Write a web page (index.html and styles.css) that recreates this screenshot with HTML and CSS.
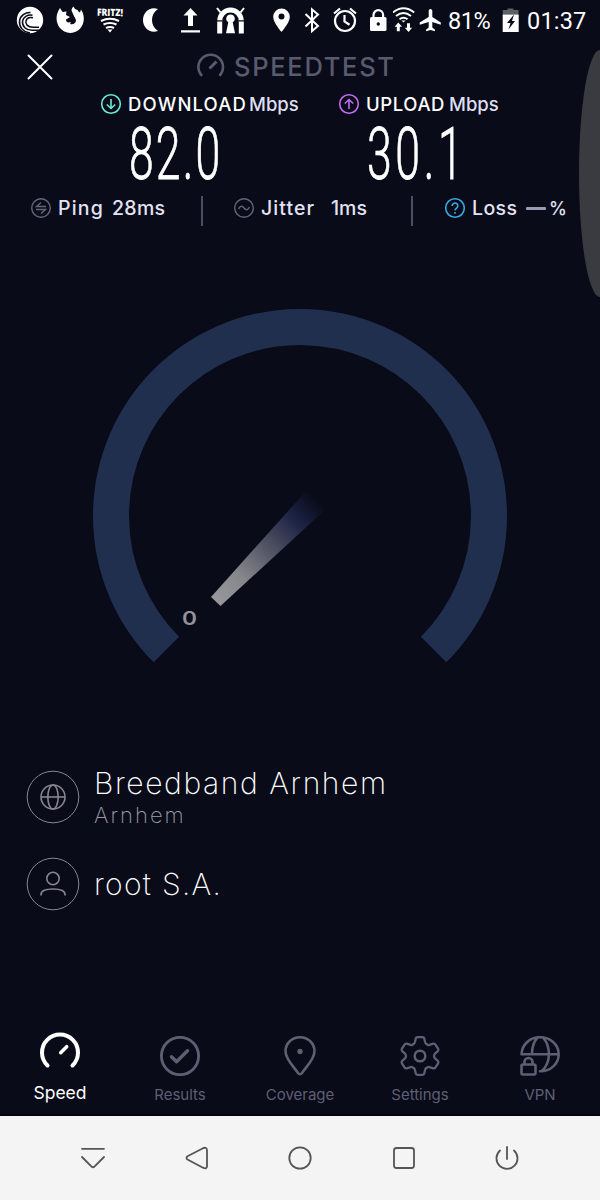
FILE: index.html
```
<!DOCTYPE html>
<html lang="en">

<head>
  <meta charset="utf-8">
  <title>Speedtest</title>
  <link rel="stylesheet" href="styles.css">
</head>

<body>
  <div class="status-bar">
    <div class="notifications">
      <svg width="40" height="40" viewBox="10 0 40 40">
        <circle cx="30" cy="20" r="13.2" fill="#fff"/>
        <g fill="none" stroke="#090b19" stroke-width="1.500">
          <path d="M39 27.300h-6c-5 0-8-3-7-6.500 1-3 4-4 7-3"/>
          <path d="M40 30.300h-8c-6 0-10-4-9.500-9 .5-4 5-7 10-6"/>
          <path d="M30 33c-7-1-11-6-10.500-12 .5-5 6-9 11-8.500"/>
        </g>
      </svg>
      <svg width="40" height="40" viewBox="50 0 40 40">
        <path fill="#fff" d="M60 8l2.500 4 4-.5-.5 3.500 4 2-4 2.500c0 2.500 2 3.500 5 2.500l-1 2c3.500 1 6-1 6-4l-2.500-5-2-4.500c0-2 1-3 2-4l1.500 2.500 2.500 1c.5 1 1.500 2 2.500 2.500l1-3c5 7 3 17-3 21-6 4-14 3-18.500-3-4-6-4-13 .5-19.500z"/>
      </svg>
      <svg width="40" height="40" viewBox="90 0 40 40">
        <g transform="rotate(1 110 12)">
          <text class="fritz" x="97" y="16" textLength="26" lengthAdjust="spacingAndGlyphs">FRITZ!</text>
        </g>
        <g fill="none" stroke="#fff" stroke-width="2.200">
          <path d="M101 21q9-4.500 18 0M103.500 24.500q6.500-3 13 0M106 28q4-2 8 0"/>
        </g>
        <path fill="#fff" d="M107.500 29.500h5l-2.500 3z"/>
      </svg>
      <svg width="40" height="40" viewBox="130 0 40 40">
        <path fill="#fff" d="M158 9c-8-3-15 3-15 11s7 14 15 11c-8-5-8-17 0-22z"/>
      </svg>
      <svg width="40" height="40" viewBox="170 0 40 40">
        <path fill="#fff" d="M190.500 8l7 7.500H193V26h-5V15.500h-4.500zM181 30.200h19v2.300h-19z"/>
      </svg>
      <svg width="40" height="40" viewBox="210 0 40 40">
        <g fill="none" stroke="#fff">
          <path stroke-width="5" d="M219.700 33.500V21a10.800 11 0 0 1 21.600 0v12.500"/>
          <path stroke-width="2" d="M217 8l3.500 4.500M244 8l-3.500 4.500"/>
        </g>
        <path fill="#fff" d="M230.500 14.500a4.200 4.200 0 0 1 2.200 7.800l2.300 11h-9l2.300-11a4.200 4.200 0 0 1 2.200-7.800z"/>
        <path stroke="#090b19" stroke-width="1.200" d="M216.500 20.800h6M238.500 20.800h6"/>
      </svg>
    </div>
    <div class="system">
      <svg width="32" height="40" viewBox="265 0 32 40">
        <path fill="#fff" fill-rule="evenodd" d="M281.500 8.500a8.300 8.300 0 0 0-8.300 8.300c0 6 8.300 15.200 8.300 15.200s8.300-9.200 8.300-15.200a8.300 8.300 0 0 0-8.300-8.300zm0 5a3 3 0 1 1 0 6 3 3 0 0 1 0-6z"/>
      </svg>
      <svg width="30" height="40" viewBox="297 0 30 40">
        <path fill="none" stroke="#fff" stroke-width="2" d="M305.500 14l12.500 12-6 5V9.500l6 5-12.500 12"/>
      </svg>
      <svg width="36" height="40" viewBox="327 0 36 40">
        <g fill="none" stroke="#fff" stroke-width="2.200">
          <circle cx="345" cy="21" r="10"/>
          <path d="M344.500 15v6.500l5 3.200M334 13.500l6-5M356 13.500l-6-5"/>
        </g>
      </svg>
      <svg width="30" height="40" viewBox="363 0 30 40">
        <rect x="370" y="17" width="16.500" height="14" rx="1.500" fill="#fff"/>
        <path fill="none" stroke="#fff" stroke-width="2.200" d="M373.500 17.500V15a4.800 4.800 0 0 1 9.600 0v2.500"/>
        <circle cx="378.300" cy="24" r="1.700" fill="#090b19"/>
      </svg>
      <svg width="22" height="40" viewBox="393 0 22 40">
        <g fill="none" stroke="#fff" stroke-width="1.900">
          <path d="M392.800 12.500q10.700-8.500 21.400 0M396 16q7.500-6 15 0M399.500 19.300q4-3 8 0"/>
        </g>
        <path fill="#fff" d="M401.500 20.500h4l-2 2zM398.300 22.500l3.700 4.200h-2.200v4.500h-3v-4.500h-2.200zM408.500 32l-3.700-4.200h2.200v-4.500h3v4.500h2.200z"/>
      </svg>
      <svg width="30" height="40" viewBox="415 0 30 40">
        <path fill="#fff" d="M430.500 9c1.200 0 1.800 1 1.800 2v6l8.500 5.500v2.200l-8.500-2.700v5.500l2.700 2.200v1.600l-4.500-1.300-4.500 1.300v-1.600l2.700-2.200V22l-9 2.700v-2.200l9-5.500v-6c0-1 .6-2 1.800-2z"/>
      </svg>
      <span class="percent">81%</span>
      <svg width="24" height="40" viewBox="498 0 24 40">
        <path fill="#5d5f69" d="M507.500 8.500h6V10h5v4.500h-15.800V10h4.800z"/>
        <path fill="#fff" d="M502.700 14.500h16V32h-16z"/>
        <path fill="#090b19" d="M514 14.500l-7 8.500h3.500l-2 6.500 6.500-8.500h-3z"/>
      </svg>
      <span class="clock">01:37</span>
    </div>
  </div>

  <div class="edge-handle"></div>

  <header class="header">
    <svg width="80" height="52" viewBox="0 40 80 52">
      <path stroke="#fff" stroke-width="2" stroke-linecap="round" d="M28.500 55.500l23 23M51.500 55.500l-23 23"/>
    </svg>
    <svg class="logo" width="38" height="52" viewBox="192 40 38 52">
      <g fill="none" stroke="#5a5a6e" stroke-width="2.600">
        <path d="M202 75.800a12.300 12.300 0 1 1 17.400 0"/>
        <path stroke-width="3" d="M209.500 68.500l7-7"/>
      </g>
    </svg>
    <h1 class="title">SPEEDTEST</h1>
  </header>

  <section class="speeds">
    <div class="speed download">
      <div class="speed-label">
        <svg width="22" height="22" viewBox="0 0 22 22" fill="none" stroke="#6fe9d5" stroke-width="1.600">
          <circle cx="11" cy="11" r="9.300"/>
          <path d="M11 6v9.500M6.800 11.500l4.200 4 4.200-4"/>
        </svg>
        <span class="name">DOWNLOAD</span><span class="unit">Mbps</span>
      </div>
      <div class="value"><span>82.0</span></div>
    </div>
    <div class="speed upload">
      <div class="speed-label">
        <svg width="22" height="22" viewBox="0 0 22 22" fill="none" stroke="#c06bf0" stroke-width="1.600">
          <circle cx="11" cy="11" r="9.300"/>
          <path d="M11 16V6.500M6.800 10.500l4.200-4 4.200 4"/>
        </svg>
        <span class="name">UPLOAD</span><span class="unit">Mbps</span>
      </div>
      <div class="value"><span>30.1</span></div>
    </div>
  </section>

  <section class="metrics">
    <div class="metric ping">
      <svg width="22" height="22" viewBox="0 0 22 22" fill="none" stroke="#656579" stroke-width="1.400">
        <circle cx="11" cy="11" r="9.300"/>
        <path d="M16 9.500H6.500l4.500-4M6 12.500h9.500l-4.500 4"/>
      </svg>
      <span class="key">Ping</span><span>28ms</span>
    </div>
    <div class="metric jitter">
      <svg width="22" height="22" viewBox="0 0 22 22" fill="none" stroke="#656579" stroke-width="1.400">
        <circle cx="11" cy="11" r="9.300"/>
        <path d="M5.500 12c2-4 4-3 5.500-1s3.500 3 5.500-1"/>
      </svg>
      <span class="key">Jitter</span><span>1ms</span>
    </div>
    <div class="metric loss">
      <svg width="22" height="22" viewBox="0 0 22 22" fill="none" stroke="#38a9e4" stroke-width="1.600">
        <circle cx="11" cy="11" r="9.300"/>
        <path d="M8.200 9a2.800 2.800 0 1 1 4.600 2c-1.200.9-1.800 1.200-1.800 2.500M11 15v1.800"/>
      </svg>
      <span class="key">Loss</span><i class="dash"></i><span class="loss-unit">%</span>
    </div>
  </section>

  <section class="gauge">
    <svg width="600" height="400" viewBox="0 290 600 400">
      <defs>
        <linearGradient id="needle" gradientUnits="userSpaceOnUse" x1="216" y1="601" x2="317" y2="500">
          <stop offset="0" stop-color="#98989c"/>
          <stop offset=".25" stop-color="#85868b"/>
          <stop offset=".55" stop-color="#4c4e60"/>
          <stop offset=".8" stop-color="#1b2344"/>
          <stop offset="1" stop-color="#090b19"/>
        </linearGradient>
      </defs>
      <path fill="none" stroke="#212f4f" stroke-width="36" d="M166.400 649.600a189 189 0 1 1 267.200 0"/>
      <path fill="url(#needle)" d="M211 597l9.500 9L327 508l-20-18z"/>
      <text class="tick" x="182" y="625" textLength="15" lengthAdjust="spacingAndGlyphs">0</text>
    </svg>
  </section>

  <section class="hosts">
    <div class="host">
      <svg width="54" height="54" viewBox="0 0 54 54" fill="none" stroke="#85868f">
        <circle cx="27" cy="27" r="25.800" stroke-width="1"/>
        <g stroke-width="1.600">
          <circle cx="27" cy="27" r="12"/>
          <ellipse cx="27" cy="27" rx="5.200" ry="12"/>
          <path d="M15 27h24"/>
        </g>
      </svg>
      <div class="host-text">
        <div class="host-name server">Breedband Arnhem</div>
        <div class="host-place">Arnhem</div>
      </div>
    </div>
    <div class="host">
      <svg width="54" height="54" viewBox="0 0 54 54" fill="none" stroke="#85868f">
        <circle cx="27" cy="27" r="25.800" stroke-width="1"/>
        <g stroke-width="1.600">
          <circle cx="27" cy="21.500" r="6.200"/>
          <path d="M15 38.500v-1c0-3.500 4-5.500 12-5.500s12 2 12 5.500v1"/>
        </g>
      </svg>
      <div class="host-text">
        <div class="host-name provider">root S.A.</div>
      </div>
    </div>
  </section>

  <nav class="tabs">
    <a class="tab active">
      <svg width="44" height="44" viewBox="0 0 44 44" fill="none" stroke="#fff" stroke-width="4" stroke-linecap="round">
        <path d="M9.500 35.500a18 18 0 1 1 25 0"/>
        <path stroke-width="3.500" d="M22.700 22.700l6-6"/>
      </svg>
      <span>Speed</span>
    </a>
    <a class="tab">
      <svg width="44" height="44" viewBox="0 0 44 44" fill="none" stroke="#5f5f73" stroke-width="2.800" stroke-linecap="round" stroke-linejoin="round">
        <circle cx="22" cy="22" r="18.600"/>
        <path stroke-width="3.400" d="M13.500 22.800l5 5 11-11"/>
      </svg>
      <span>Results</span>
    </a>
    <a class="tab">
      <svg width="44" height="44" viewBox="0 0 44 44" fill="none" stroke="#5f5f73" stroke-width="2.600" stroke-linejoin="round">
        <path d="M22 3.300c-8 0-14.500 6-14.500 14C7.500 25.500 16 33 20 39q2 2.500 4 0c4-6 12.500-13.500 12.500-21.700 0-8-6.500-14-14.500-14z"/>
        <circle cx="22" cy="17.500" r="2.700" fill="#5f5f73" stroke="none"/>
      </svg>
      <span>Coverage</span>
    </a>
    <a class="tab">
      <svg width="44" height="44" viewBox="0 0 44 44" fill="none" stroke="#5f5f73" stroke-width="2.300" stroke-linejoin="round">
        <path d="M19.500 3.200h5q1.500 0 1.800 1.500l.8 3.600q.3 1.200 1.500 1.800l1 .6q1 .6 2 .2l3.600-1.200q1.500-.4 2.300.9l2.700 4.200q.8 1.300-.4 2.400l-2.800 2.500q-.9.900-.9 1.900v.8q0 1 .9 1.900l2.800 2.500q1.200 1.100.4 2.400l-2.700 4.200q-.8 1.300-2.300.9l-3.600-1.200q-1-.4-2 .2l-1 .6q-1.200.6-1.500 1.800l-.8 3.600q-.3 1.500-1.800 1.500h-5q-1.500 0-1.800-1.500l-.8-3.600q-.3-1.200-1.500-1.800l-1-.6q-1-.6-2-.2l-3.600 1.200q-1.500.4-2.300-.9l-2.700-4.200q-.8-1.300.4-2.400l2.800-2.500q.9-.9.900-1.900v-.8q0-1-.9-1.900l-2.800-2.500q-1.200-1.100-.4-2.400l2.700-4.200q.8-1.300 2.300-.9l3.600 1.200q1 .4 2-.2l1-.6q1.200-.6 1.500-1.800l.8-3.600q.3-1.500 1.800-1.500z"/>
        <circle cx="22" cy="22" r="5.300" stroke-width="2.500"/>
      </svg>
      <span>Settings</span>
    </a>
    <a class="tab">
      <svg width="44" height="44" viewBox="0 0 44 44" fill="none" stroke="#5f5f73" stroke-width="2.600" stroke-linecap="round" stroke-linejoin="round">
        <path d="M3.500 20.300C4 10 12 3.300 22 3.300s18.700 7 18.700 17S32 37.500 22 37.300M3.500 20.300h37M14 20.300c0-7 2-13 5.500-16.800M25 3.500c8 9 8 25-1 33.500"/>
        <rect x="3.500" y="30.500" width="14" height="10" rx="1.500"/>
        <path d="M6.500 30V28a4 4 0 0 1 8 0v2"/>
      </svg>
      <span>VPN</span>
    </a>
  </nav>

  <div class="nav-bar">
    <svg width="28" height="28" viewBox="0 0 28 28"><path d="M3 4.800h22M3 13l9.800 9.800q1.200 1 2.400 0L25 13"/></svg>
    <svg width="28" height="28" viewBox="0 0 28 28"><path d="M4.500 12.200L20 4.200q4-1.500 4 2v16q0 3.200-4 1.500L4.500 15.500q-2-1.600 0-3.300z"/></svg>
    <svg width="28" height="28" viewBox="0 0 28 28"><circle cx="14" cy="14" r="10.700"/></svg>
    <svg width="28" height="28" viewBox="0 0 28 28"><rect x="4" y="4" width="20" height="20" rx="2.500"/></svg>
    <svg width="28" height="28" viewBox="0 0 28 28"><path d="M14 3v12M7 6.500a10.500 10.500 0 1 0 14 0"/></svg>
  </div>
</body>

</html>
```
FILE: styles.css
```
body {
  margin: 0;
  width: 600px;
  height: 1200px;
  overflow: hidden;
  display: flex;
  flex-direction: column;
  position: relative;
  background-color: #090b19;
  color: #fff;
  font-family: Inter, sans-serif;
}

svg {
  display: block;
  flex: none;
}

.status-bar {
  height: 40px;
  display: flex;
  padding-left: 10px;
  font-family: Roboto, sans-serif;
  font-size: 23.5px;
  line-height: 42px;
}

.notifications,
.system {
  display: flex;
}

.notifications {
  width: 255px;
}

.fritz {
  font: 800 10px "Open Sans", sans-serif;
  fill: #fff;
}

.percent {
  width: 50px;
  padding-left: 3px;
  letter-spacing: -0.4px;
}

.clock {
  padding-left: 5px;
  letter-spacing: 0.2px;
}

.edge-handle {
  position: absolute;
  top: 50px;
  left: 579px;
  width: 42px;
  height: 247px;
  border-radius: 50%;
  background-color: #3a3b40;
}

.header {
  height: 52px;
  display: flex;
  align-items: center;
}

.logo {
  margin-left: 112px;
}

.title {
  margin: 2px 0 0 4px;
  font-size: 25.5px;
  font-weight: 500;
  line-height: 30px;
  letter-spacing: 1.7px;
  color: #5a5a6e;
}

.speeds {
  height: 98px;
  display: flex;
  padding-left: 100px;
}

.speed {
  width: 238px;
}

.speed-label {
  height: 24px;
  display: flex;
  align-items: center;
  font-size: 18.5px;
}

.name {
  width: 116px;
  margin-left: 6px;
  font-weight: 500;
  letter-spacing: 1.15px;
}

.upload .name {
  width: 78px;
  letter-spacing: 0.6px;
}

.unit {
  margin-left: 5px;
  font-weight: 500;
  color: #dfdff3;
}

.value {
  height: 72px;
  margin-left: 29px;
  font-family: Roboto, sans-serif;
  font-size: 73px;
  font-weight: 300;
  line-height: 76px;
}

.value span {
  display: inline-block;
  transform: scaleX(0.61);
  transform-origin: left;
  letter-spacing: 3.5px;
  -webkit-text-stroke: 0.8px #fff;
}

.upload .value span {
  letter-spacing: 6px;
}

.metrics {
  height: 40px;
  display: flex;
  font-size: 19.5px;
  font-weight: 500;
  color: #e3e3f4;
}

.metric {
  height: 36px;
  display: flex;
  align-items: center;
}

.metric svg {
  margin-right: 6px;
}

.ping {
  width: 171px;
  padding-left: 30px;
  letter-spacing: 0.3px;
}

.ping .key {
  width: 54px;
  letter-spacing: 1.2px;
}

.jitter {
  width: 178px;
  padding-left: 32px;
}

.jitter .key {
  width: 70px;
  letter-spacing: 1.1px;
}

.jitter,
.loss {
  position: relative;
}

.jitter::before,
.loss::before {
  content: "";
  position: absolute;
  left: 0;
  top: 6px;
  width: 1.5px;
  height: 30px;
  background-color: #4e4f5e;
}

.loss {
  padding-left: 33px;
}

.loss .key {
  width: 54px;
  letter-spacing: 0.4px;
}

.loss-unit {
  font-size: 18px;
}

.dash {
  width: 20px;
  height: 3px;
  margin-right: 3px;
  border-radius: 1px;
  background-color: #9a9ab5;
}

.gauge {
  height: 400px;
  margin-top: 60px;
}

.tick {
  font-size: 19px;
  font-weight: 600;
  fill: #929299;
}

.hosts {
  height: 180px;
  padding: 80px 0 0 26px;
}

.host {
  height: 87px;
  display: flex;
}

.host-text {
  margin-left: 14px;
  font-weight: 200;
}

.host-name {
  font-size: 30px;
  line-height: 36px;
  margin-top: -5px;
}

.server {
  letter-spacing: 1.6px;
}

.provider {
  margin-top: 9px;
  letter-spacing: 1.3px;
}

.host-place {
  font-size: 22px;
  line-height: 28px;
  letter-spacing: 2px;
  color: #9a9ba3;
}

.tabs {
  height: 80px;
  display: flex;
  margin-top: 84px;
  border-bottom: 2px solid #05060f;
}

.tab {
  width: 120px;
  display: flex;
  flex-direction: column;
  align-items: center;
  font-size: 15px;
  line-height: 20px;
  color: #5f5f73;
}

.tab span {
  margin-top: 7px;
}

.active {
  margin-top: -4px;
  font-size: 17.5px;
  color: #fff;
}

.active span {
  margin-top: 9px;
}

.nav-bar {
  flex: 1;
  display: flex;
  justify-content: space-between;
  align-items: center;
  padding: 0 79px;
  background-color: #f4f4f4;
}

.nav-bar svg {
  fill: none;
  stroke: #555;
  stroke-width: 1.8;
  stroke-linecap: round;
}
```
